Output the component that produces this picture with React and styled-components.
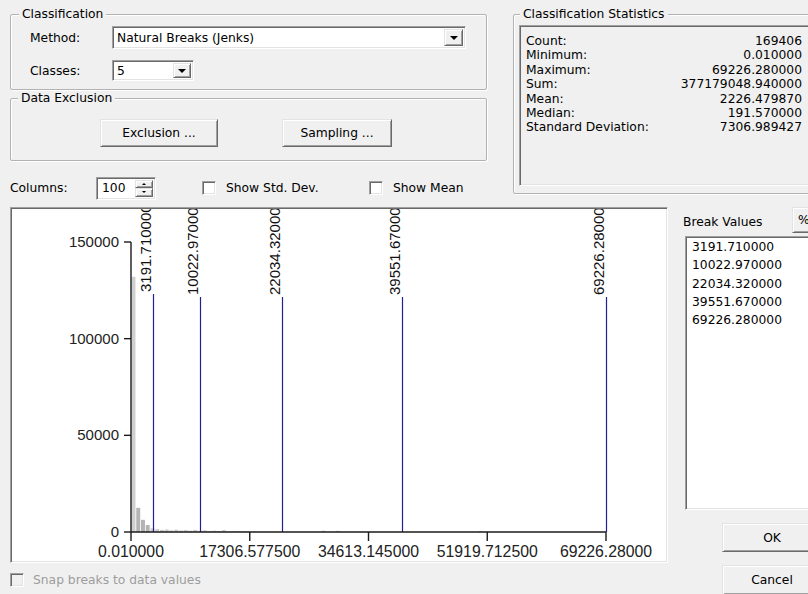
import React from "react";
import styled, { createGlobalStyle, css } from "styled-components";

const GlobalStyle = createGlobalStyle`
  html, body {
    margin: 0;
    padding: 0;
    background: #f0f0f0;
    overflow: hidden;
  }
  body {
    font-family: "DejaVu Sans", "Liberation Sans", sans-serif;
    font-size: 12.3px;
    color: #000;
  }
`;

const sunken = css`
  box-sizing: border-box;
  border: 1px solid;
  border-color: #a0a0a0 #fff #fff #a0a0a0;
  box-shadow: inset 1px 1px 0 #696969, inset -1px -1px 0 #e3e3e3;
`;

const raised = css`
  box-sizing: border-box;
  background: #f0f0f0;
  border: 1px solid;
  border-color: #e3e3e3 #696969 #696969 #e3e3e3;
  box-shadow: inset 1px 1px 0 #fff, inset -1px -1px 0 #a0a0a0;
`;

const Dialog = styled.div`
  width: 840px;
  height: 594px;
  overflow: hidden;
  display: flex;
  flex-direction: column;
`;

const TopArea = styled.div`
  display: flex;
  height: 200px;
  box-sizing: border-box;
  padding: 7px 0 0 10px;
`;

const LeftCol = styled.div`
  width: 477px;
  display: flex;
  flex-direction: column;
`;

const Group = styled.fieldset`
  margin: 0;
  padding: 0;
  min-width: 0;
  box-sizing: border-box;
  width: ${(p) => p.$w}px;
  height: ${(p) => p.$h}px;
  border: 1px solid #b2b2b2;
  border-radius: 2px;
  box-shadow: inset 1px 1px 0 #fff, 1px 1px 0 #fff;
`;

const Legend = styled.legend`
  margin-left: ${(p) => p.$indent}px;
  padding: 0 3px;
  height: 14px;
  line-height: 14px;
  background: #f0f0f0;
`;

const FormGrid = styled.div`
  display: grid;
  grid-template-columns: 82px auto;
  align-items: center;
  row-gap: 11px;
  padding: 5px 0 0 19px;
`;

const Combo = styled.div`
  ${sunken};
  width: ${(p) => p.$w}px;
  height: ${(p) => p.$h}px;
  background: #fff;
  display: flex;
  align-items: stretch;
  padding: 2px 2px 2px 4px;
`;

const ComboText = styled.span`
  flex: 1;
  display: flex;
  align-items: center;
`;

const ArrowButton = styled.span`
  ${raised};
  width: ${(p) => p.$w || 18}px;
  display: flex;
  align-items: center;
  justify-content: center;
`;

const Arrow = styled.span`
  width: 0;
  height: 0;
  border-left: ${(p) => p.$size}px solid transparent;
  border-right: ${(p) => p.$size}px solid transparent;
  ${(p) =>
    p.$up
      ? `border-bottom: ${p.$size}px solid #000;`
      : `border-top: ${p.$size}px solid #000;`}
`;

const ExclusionGroup = styled(Group)`
  margin-top: 1px;
`;

const ButtonRow = styled.div`
  display: flex;
  gap: 64px;
  padding: 14px 0 0 89px;
`;

const PushButton = styled.div`
  ${raised};
  width: ${(p) => p.$w}px;
  height: ${(p) => p.$h}px;
  display: flex;
  align-items: center;
  justify-content: ${(p) => (p.$left ? "flex-start" : "center")};
  padding-left: ${(p) => (p.$left ? 5 : 0)}px;
`;

const ColumnsRow = styled.div`
  display: flex;
  align-items: center;
  margin-top: 15px;
  height: 24px;
`;

const FieldLabel = styled.span`
  width: ${(p) => p.$w}px;
  flex-shrink: 0;
`;

const Spin = styled.div`
  ${sunken};
  width: 60px;
  height: 23px;
  background: #fff;
  display: flex;
  padding: 2px;
`;

const SpinText = styled.span`
  flex: 1;
  display: flex;
  align-items: center;
  padding-left: 3px;
`;

const SpinButtons = styled.span`
  width: 18px;
  display: flex;
  flex-direction: column;
`;

const SpinButton = styled(ArrowButton)`
  flex: 1;
  width: auto;
`;

const CheckItem = styled.label`
  display: flex;
  align-items: center;
  gap: ${(p) => p.$gap || 10}px;
  width: ${(p) => (p.$w ? `${p.$w}px` : "auto")};
  margin-left: ${(p) => p.$ml || 0}px;
  color: ${(p) => (p.$disabled ? "#9d9d9d" : "#000")};
`;

const CheckBox = styled.span`
  ${sunken};
  width: 14px;
  height: 14px;
  background: ${(p) => (p.$disabled ? "#f0f0f0" : "#fff")};
`;

const StatsGroup = styled(Group)`
  margin-left: 26px;
`;

const StatsList = styled.div`
  ${sunken};
  width: 300px;
  height: 161px;
  margin: 4px 0 0 5px;
  padding: 8px 16px 0 6px;
  line-height: 14.4px;
`;

const StatRow = styled.div`
  display: flex;
  justify-content: space-between;
`;

const MiddleArea = styled.div`
  display: flex;
  margin-top: 7px;
  padding-left: 10px;
`;

const LeftStack = styled.div`
  display: flex;
  flex-direction: column;
`;

const ChartPanel = styled.div`
  box-sizing: border-box;
  width: 658px;
  height: 356px;
  background: #fff;
  border: 1px solid;
  border-color: #a0a0a0 #fff #fff #a0a0a0;
  box-shadow: inset 1px 1px 0 #696969, inset -1px -1px 0 #e3e3e3;
  padding: 1px;
  svg {
    display: block;
  }
`;

const SnapRow = styled.div`
  margin-top: 10px;
`;

const SidePanel = styled.div`
  margin-left: 15px;
  width: 160px;
  display: flex;
  flex-direction: column;
`;

const SideHeader = styled.div`
  display: flex;
  align-items: center;
  height: 26px;
`;

const SideLabel = styled.span`
  width: 109px;
  padding-top: 4px;
`;

const BreakList = styled.div`
  ${sunken};
  width: 150px;
  height: 274px;
  margin: 3px 0 0 2px;
  background: #fff;
  padding: 1px 0 0 6px;
  line-height: 18.3px;
`;

const DialogButton = styled(PushButton)`
  margin: 13px 0 0 39px;
`;

const stats = [
  ["Count:", "169406"],
  ["Minimum:", "0.010000"],
  ["Maximum:", "69226.280000"],
  ["Sum:", "377179048.940000"],
  ["Mean:", "2226.479870"],
  ["Median:", "191.570000"],
  ["Standard Deviation:", "7306.989427"],
];

const breaks = [
  { v: 3191.71, label: "3191.710000", top: 292 },
  { v: 10022.97, label: "10022.970000", top: 295 },
  { v: 22034.32, label: "22034.320000", top: 295 },
  { v: 39551.67, label: "39551.670000", top: 295 },
  { v: 69226.28, label: "69226.280000", top: 295 },
];

// histogram plot area, in page pixels
const X0 = 131;
const X1 = 606;
const Y0 = 532;
const YTOP = 242;
const MIN = 0.01;
const MAX = 69226.28;
const xOf = (v) => X0 + ((v - MIN) / (MAX - MIN)) * (X1 - X0);
const yOf = (c) => Y0 - (c / 150000) * (Y0 - YTOP);

const counts = [
  132000, 12500, 6300, 3600, 1900, 1500, 1100, 1300, 900, 1200, 800, 1000,
  700, 1100, 600, 900, 500, 700, 400, 1000, 300, 500, 400, 300, 200, 150,
];
const sparse = { 40: 700, 43: 600, 73: 500 };
const colW = (X1 - X0) / 100;

const bars = [];
for (let i = 0; i < 100; i++) {
  const c = counts[i] ?? sparse[i] ?? 0;
  if (c > 0) bars.push({ i, c });
}

const yTicks = [150000, 100000, 50000, 0];
const xTicks = [
  [0.01, "0.010000"],
  [17306.5775, "17306.577500"],
  [34613.145, "34613.145000"],
  [51919.7125, "51919.712500"],
  [69226.28, "69226.28000"],
];

function Histogram() {
  return (
    <svg width="654" height="352" viewBox="12 209 654 352" fontFamily="Liberation Sans, Arial, sans-serif" fontSize="15">
      {bars.map(({ i, c }) => {
        const top = yOf(c);
        return (
          <rect
            key={i}
            x={X0 + i * colW + 0.5}
            y={top}
            width={colW - 0.8}
            height={Y0 - top}
            fill={c > 100000 ? "#cfcfcf" : c > 2500 ? "#b4b4b4" : "#cdcdcd"}
          />
        );
      })}
      {breaks.map((b) => {
        const x = Math.round(xOf(b.v)) + 0.5;
        return (
          <g key={b.label}>
            <line x1={x} x2={x} y1={b.top + 2} y2={Y0} stroke="#1f1f96" strokeWidth="1.2" />
            <text transform={`translate(${x - 2.5}, ${b.top}) rotate(-90)`} fill="#111">
              {b.label}
            </text>
          </g>
        );
      })}
      <line x1={X0} x2={X0} y1={YTOP} y2={Y0} stroke="#1a1a1a" strokeWidth="1.4" />
      <line x1={X0} x2={X1} y1={Y0} y2={Y0} stroke="#1a1a1a" strokeWidth="1.4" />
      {yTicks.map((t) => (
        <g key={t}>
          <line x1={124} x2={X0} y1={yOf(t)} y2={yOf(t)} stroke="#1a1a1a" strokeWidth="1.4" />
          <text x={119} y={yOf(t) + 5} textAnchor="end" fill="#222">
            {t}
          </text>
        </g>
      ))}
      {xTicks.map(([v, label]) => (
        <g key={label}>
          <line x1={xOf(v)} x2={xOf(v)} y1={Y0} y2={541} stroke="#1a1a1a" strokeWidth="1.4" />
          <text x={xOf(v)} y={557} textAnchor="middle" fontSize="15.8" fill="#222">
            {label}
          </text>
        </g>
      ))}
    </svg>
  );
}

export default function App() {
  return (
    <>
      <GlobalStyle />
      <Dialog>
        <TopArea>
          <LeftCol>
            <Group $w={477} $h={83}>
              <Legend $indent={8}>Classification</Legend>
              <FormGrid>
                <span>Method:</span>
                <Combo $w={354} $h={23}>
                  <ComboText>Natural Breaks (Jenks)</ComboText>
                  <ArrowButton $w={19}>
                    <Arrow $size={4} />
                  </ArrowButton>
                </Combo>
                <span>Classes:</span>
                <Combo $w={82} $h={21}>
                  <ComboText>5</ComboText>
                  <ArrowButton $w={18}>
                    <Arrow $size={4} />
                  </ArrowButton>
                </Combo>
              </FormGrid>
            </Group>
            <ExclusionGroup $w={477} $h={70}>
              <Legend $indent={7}>Data Exclusion</Legend>
              <ButtonRow>
                <PushButton $w={118} $h={28}>Exclusion ...</PushButton>
                <PushButton $w={110} $h={28}>Sampling ...</PushButton>
              </ButtonRow>
            </ExclusionGroup>
            <ColumnsRow>
              <FieldLabel $w={86}>Columns:</FieldLabel>
              <Spin>
                <SpinText>100</SpinText>
                <SpinButtons>
                  <SpinButton>
                    <Arrow $up $size={2.5} />
                  </SpinButton>
                  <SpinButton>
                    <Arrow $size={2.5} />
                  </SpinButton>
                </SpinButtons>
              </Spin>
              <CheckItem $w={167} $ml={46}>
                <CheckBox />
                Show Std. Dev.
              </CheckItem>
              <CheckItem>
                <CheckBox />
                Show Mean
              </CheckItem>
            </ColumnsRow>
          </LeftCol>
          <StatsGroup $w={330} $h={187}>
            <Legend $indent={6}>Classification Statistics</Legend>
            <StatsList>
              {stats.map(([k, v]) => (
                <StatRow key={k}>
                  <span>{k}</span>
                  <span>{v}</span>
                </StatRow>
              ))}
            </StatsList>
          </StatsGroup>
        </TopArea>
        <MiddleArea>
          <LeftStack>
            <ChartPanel>
              <Histogram />
            </ChartPanel>
            <SnapRow>
              <CheckItem $disabled $gap={9}>
                <CheckBox $disabled />
                Snap breaks to data values
              </CheckItem>
            </SnapRow>
          </LeftStack>
          <SidePanel>
            <SideHeader>
              <SideLabel>Break Values</SideLabel>
              <PushButton $w={30} $h={26} $left>
                %
              </PushButton>
            </SideHeader>
            <BreakList>
              {breaks.map((b) => (
                <div key={b.label}>{b.label}</div>
              ))}
            </BreakList>
            <DialogButton $w={100} $h={29}>OK</DialogButton>
            <DialogButton $w={100} $h={30}>Cancel</DialogButton>
          </SidePanel>
        </MiddleArea>
      </Dialog>
    </>
  );
}
